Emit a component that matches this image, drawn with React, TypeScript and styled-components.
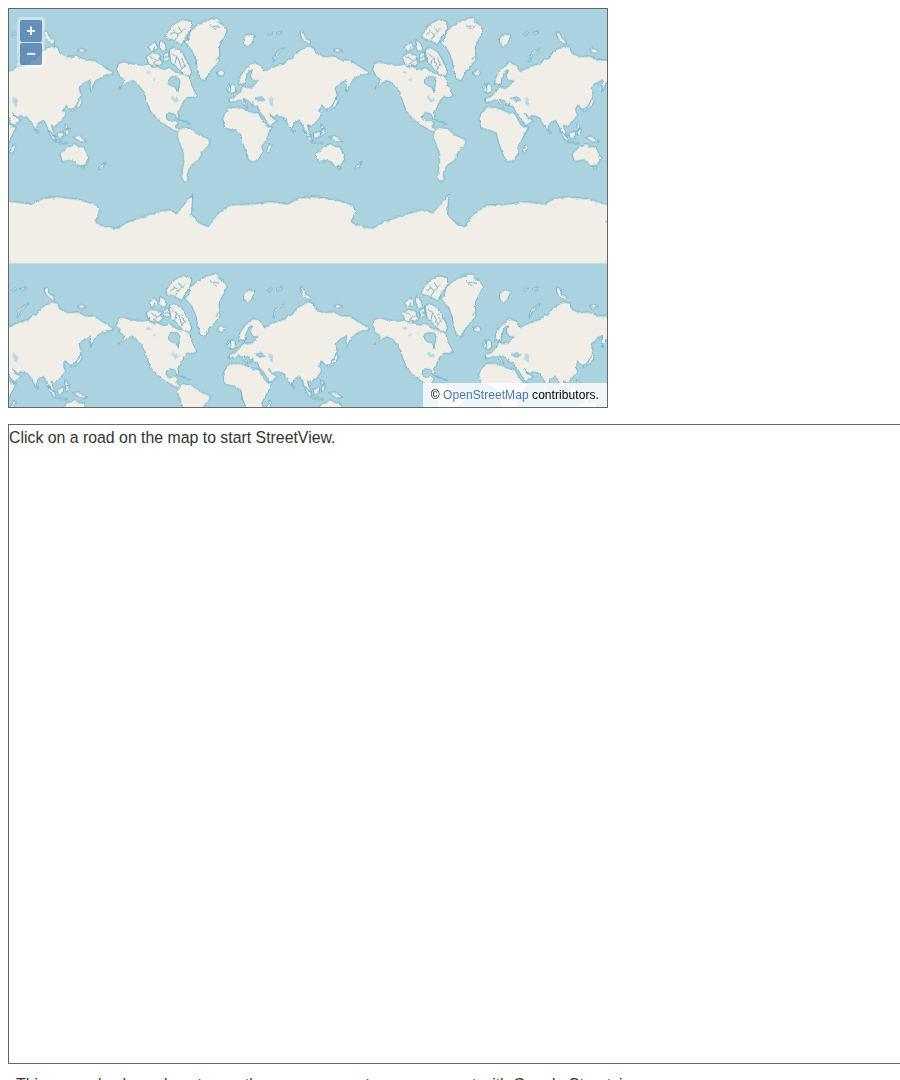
import React from "react";
import styled, { createGlobalStyle } from "styled-components";

const Global = createGlobalStyle`
  body {
    margin: 8px 0 8px 8px;
    font-family: "Liberation Sans", Arial, sans-serif;
    font-size: 15.85px;
    line-height: 24px;
    color: #333;
    background: #fff;
  }
`;

const MapBox = styled.div`
  position: relative;
  box-sizing: border-box;
  width: 600px;
  height: 400px;
  border: 1px solid #666;
  overflow: hidden;
  background: #aad3df;
`;

const MapCanvas = styled.svg`
  display: block;
  width: 598px;
  height: 398px;
`;

const Land = styled.polygon`
  fill: #f1eee8;
  stroke: #72b2c9;
  stroke-width: 3;
  stroke-linejoin: round;
`;

const Ice = styled.polygon`
  fill: #f1eee8;
`;

const IceBand = styled.rect`
  fill: #f1eee8;
`;

const Coast = styled.polyline`
  fill: none;
  stroke: #72b2c9;
  stroke-width: 3;
  stroke-linejoin: round;
`;

const Lake = styled.polygon`
  fill: #b4dae5;
`;

const Sea = styled.polygon`
  fill: #aad3df;
  stroke: #72b2c9;
  stroke-width: 2.6;
  stroke-linejoin: round;
`;

const ZoomPanel = styled.div`
  position: absolute;
  top: 8px;
  left: 8px;
  display: flex;
  flex-direction: column;
  gap: 1px;
  padding: 3px;
  border-radius: 4px;
  background: rgba(255, 255, 255, 0.4);
`;

const ZoomButton = styled.button`
  width: 22px;
  height: 22px;
  padding: 0;
  border: 0;
  border-radius: 2px;
  background: rgba(0, 60, 136, 0.5);
  color: #fff;
  font: 700 16px/22px "Liberation Sans", Arial, sans-serif;
  text-align: center;
`;

const Attribution = styled.div`
  position: absolute;
  right: 0;
  bottom: 0;
  padding: 2px 8px;
  background: rgba(255, 255, 255, 0.8);
  color: #000;
  font-size: 12px;
  letter-spacing: 0.07px;
  line-height: 20px;
  white-space: nowrap;
`;

const AttributionLink = styled.a`
  color: rgba(0, 60, 136, 0.7);
  text-decoration: none;
`;

const ViewBox = styled.div`
  box-sizing: border-box;
  width: 1000px;
  height: 640px;
  margin-top: 16px;
  padding-top: 1px;
  border: 1px solid #666;
`;

const Description = styled.p`
  margin: 9px 0 0;
  padding-left: 8px;
  white-space: nowrap;
`;

const Code = styled.code`
  padding: 2px 5px 2px 6px;
  color: #c7254e;
  font-family: "Liberation Mono", monospace;
  font-size: 90%;
`;

const northAmerica =
  "20,178 25,160 42,155 60,160 80,163 100,165 115,162 125,170 145,170 150,175 165,178 178,172 190,182 205,190 222,192 232,196 240,205 245,225 255,245 262,258 248,262 232,262 222,272 212,295 203,308 207,320 201,326 195,312 180,308 170,315 168,325 180,335 195,330 205,340 197,350 212,358 222,368 215,372 190,360 165,345 140,325 122,305 112,280 105,260 97,240 80,220 65,212 50,218 35,232 25,235 38,222 45,210 30,200";

const hudsonBay = "175,212 183,200 203,200 210,212 204,246 199,231 185,228 176,220";

const arctic = [
  "222,95 235,90 240,65 262,45 290,30 320,22 345,50 352,62 340,85 328,110 330,150 318,165 300,185 285,213 270,205 262,175 258,150 245,120",
  "165,80 175,62 195,40 218,28 245,35 245,55 225,85 215,105 190,90 170,85",
  "178,118 192,112 215,125 235,160 245,185 240,198 225,196 205,178 195,165 185,160 180,140",
  "108,140 125,130 150,135 155,165 135,168 118,165",
  "115,110 135,95 145,115 125,125",
  "150,90 165,100 170,120 155,125 148,105",
  "160,135 175,125 178,150 160,155",
  "322,185 335,180 346,188 338,198 325,196",
  "130,160 150,148 158,158 148,168",
  "348,235 358,220 368,240 375,248 360,248",
];

const naLakes = [
  "183,262 190,256 193,266 203,262 206,272 194,278 188,270",
  "108,185 120,182 122,192 110,190",
  "128,207 140,202 132,212",
];

const arcticChannels = [
  "190,60 205,75 225,55",
  "205,75 195,90",
  "180,75 195,65",
  "205,50 215,65",
  "310,48 330,52",
  "322,35 340,45",
  "300,45 320,60",
  "318,150 328,138",
  "185,130 205,145 215,175",
  "200,140 195,160",
  "215,145 225,170",
  "225,165 212,180",
  "120,140 140,150",
  "135,110 130,120",
  "160,145 178,138",
];

const eurasia =
  "28,218 28,205 45,200 60,185 68,172 70,160 75,172 95,172 115,152 100,152 90,138 98,120 88,122 78,145 75,165 68,165 60,160 55,165 60,140 75,118 100,97 120,105 133,125 150,115 175,105 195,100 205,85 215,88 232,65 262,48 280,50 288,70 310,80 340,78 365,90 390,90 420,110 445,125 448,132 425,135 400,148 393,155 380,185 378,165 380,150 360,160 345,175 352,195 345,215 335,228 330,235 318,238 305,225 298,240 305,255 290,275 272,290 262,285 268,305 275,320 262,310 250,292 238,270 222,280 215,302 205,285 190,262 172,258 160,262 145,248 155,262 165,268 172,272 148,288 130,258 118,245 112,230 100,228 98,216 95,228 85,212 70,208 85,235 78,232 65,212 55,210 45,215";

const africa =
  "8,265 15,250 30,232 60,232 80,240 100,248 115,248 128,272 142,290 158,290 135,335 125,350 130,365 112,393 90,395 80,370 68,340 62,312 40,300 15,295";

const blackSea = "105,205 125,200 135,210 118,213";

const eurasiaIslands = [
  "25,185 35,160 45,165 48,185 35,190",
  "22,180 30,165 33,178 28,188",
  "158,95 165,70 192,52 190,58 170,75 162,95",
  "70,25 85,12 105,15 95,40 82,52 72,40",
  "142,12 155,5 158,10 146,16",
  "168,10 185,3 186,10 172,14",
  "240,5 250,5 258,25 270,30 272,42 260,40 245,25",
  "340,60 352,55 368,62 352,68",
  "320,240 335,232 348,205 355,212 348,228 325,244",
  "250,300 262,310 278,330 268,332",
  "280,310 300,303 296,325 282,326",
  "305,300 316,296 314,312 305,318",
  "302,282 312,288 310,298 303,294",
  "325,320 345,318 370,335 350,336",
  "275,333 310,338 308,342 275,338",
  "288,372 310,350 322,348 330,340 345,350 360,350 375,385 365,405 345,408 325,390 295,395",
  "352,410 362,410 360,418 354,418",
  "405,415 425,395 418,412 405,420",
  "138,365 150,342 155,350 145,372",
  "218,298 224,304 220,310",
];

const southWorld = [
  "222,335 235,322 262,325 285,345 318,358 315,375 295,395 285,420 262,435 250,460 252,480 240,487 232,470 238,430 238,400 225,365 220,345",
  "220,298 248,305 238,305",
  "250,308 262,312 252,314",
];

const caspian = "147,202 158,205 160,230 150,225 145,212";

const antarcticTop =
  "95,42 130,25 170,20 235,28 290,45 300,65 285,95 300,105 350,115 385,95 430,80 485,62 510,60 530,70 555,40 578,12 575,75 600,100 625,110 650,75 690,45 760,42 810,35 863,42";

const WorldTile = () => (
  <g id="world">
    <g transform="translate(18 -30)">
      <Land points={northAmerica} />
      <Sea points={hudsonBay} />
      {arctic.map((p) => <Land key={p} points={p} />)}
      {naLakes.map((p) => <Lake key={p} points={p} />)}
      {arcticChannels.map((p) => <Coast key={p} points={p} />)}
    </g>
    {southWorld.map((p) => <Land key={p} points={p} />)}
    <g transform="translate(348 30)">
      <Land points={eurasia} />
      <Land points={africa} />
      <Sea points={blackSea} />
      {eurasiaIslands.map((p) => <Land key={p} points={p} />)}
      <Lake points={caspian} />
    </g>
    <g transform="translate(-312 510)">
      <Ice points={`${antarcticTop} 864,42 864,190 94,190`} />
      <Coast points={antarcticTop} />
    </g>
  </g>
);

const copies = [
  [-768, 0],
  [768, 0],
  [1536, 0],
  [-768, 768],
  [0, 768],
  [768, 768],
];

const App = () => (
  <>
    <Global />
    <MapBox>
      <MapCanvas viewBox="0 0 598 398">
        <defs>
          <filter id="rough" filterUnits="userSpaceOnUse" x="-1000" y="-100" width="3400" height="1500">
            <feTurbulence type="fractalNoise" baseFrequency="0.09" numOctaves="2" seed="4" result="noise" />
            <feDisplacementMap in="SourceGraphic" in2="noise" scale="9" xChannelSelector="R" yChannelSelector="G" />
            <feGaussianBlur stdDeviation="0.6" />
          </filter>
        </defs>
        <g transform="translate(95 11) scale(0.33333)" filter="url(#rough)">
          <WorldTile />
          {copies.map(([x, y]) => (
            <use key={`${x}-${y}`} href="#world" x={x} y={y} />
          ))}
        </g>
        <IceBand x="0" y="225" width="598" height="29.4" />
      </MapCanvas>
      <ZoomPanel>
        <ZoomButton>+</ZoomButton>
        <ZoomButton>−</ZoomButton>
      </ZoomPanel>
      <Attribution>
        © <AttributionLink href="#">OpenStreetMap</AttributionLink> contributors.
      </Attribution>
    </MapBox>
    <ViewBox>Click on a road on the map to start StreetView.</ViewBox>
    <Description>
      This example shows how to use the <Code>panorama-view</Code> component with Google Streetview.
    </Description>
  </>
);

export default App;
